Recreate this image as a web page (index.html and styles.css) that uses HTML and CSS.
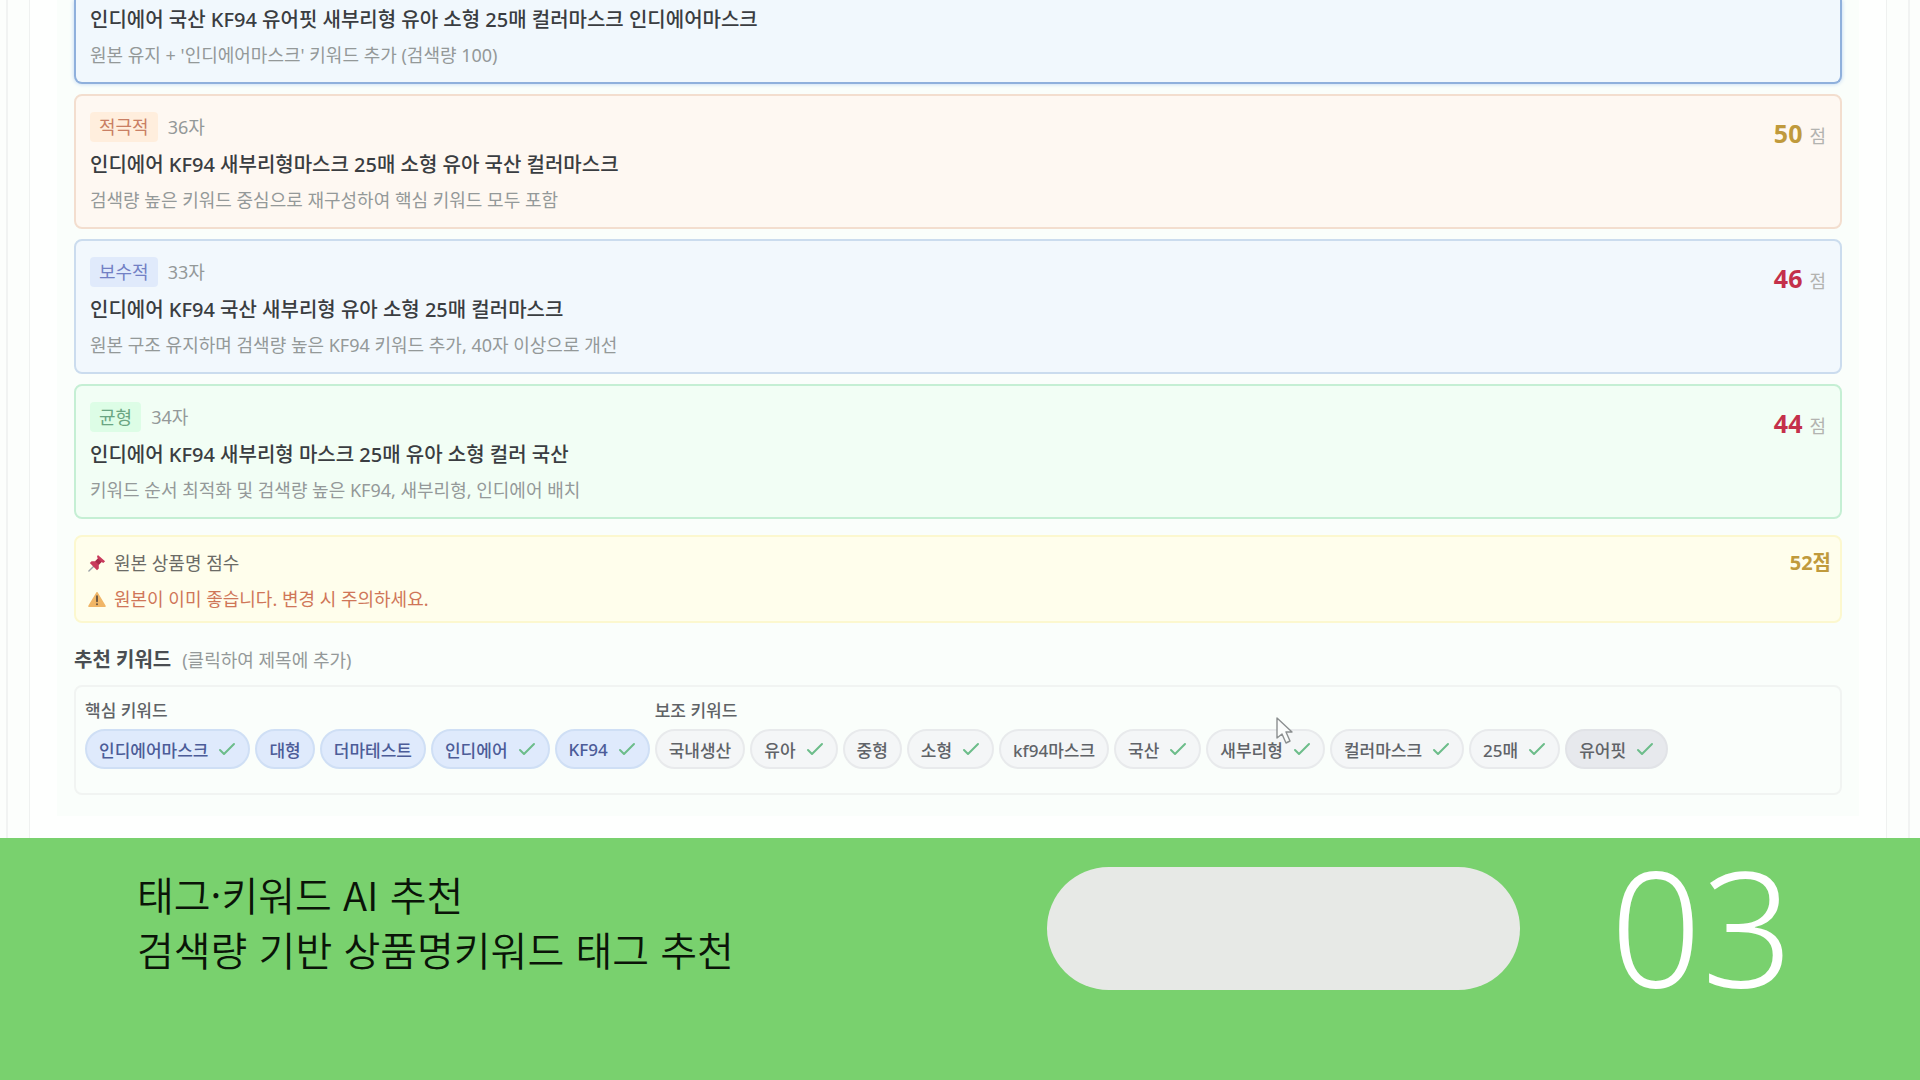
FILE: index.html
```html
<!DOCTYPE html>
<html lang="ko">
<head>
    <meta charset="UTF-8">
    <meta name="viewport" content="width=device-width, initial-scale=1.0">
    <title>태그·키워드 AI 추천</title>
    <link rel="stylesheet" href="styles.css">
</head>
<body>
    <svg class="sprite">
        <symbol id="check" viewBox="0 0 18 16">
            <path d="M2 9 L6 13 L16 3" fill="none" stroke="#6cbd8a" stroke-width="2" stroke-linecap="round" stroke-linejoin="round"/>
        </symbol>
    </svg>
    <main class="outer">
        <div class="inner">
            <div class="panel">
                <div class="card selected">
                    <div class="info">
                        <h3>인디에어 국산 KF94 유어핏 새부리형 유아 소형 25매 컬러마스크 인디에어마스크</h3>
                        <p>원본 유지 + '인디에어마스크' 키워드 추가 (검색량 100)</p>
                    </div>
                </div>
                <div class="card orange">
                    <div class="info">
                        <div class="meta"><span class="badge">적극적</span><span>36자</span></div>
                        <h3>인디에어 KF94 새부리형마스크 25매 소형 유아 국산 컬러마스크</h3>
                        <p>검색량 높은 키워드 중심으로 재구성하여 핵심 키워드 모두 포함</p>
                    </div>
                    <div class="score"><b class="gold">50</b><span>점</span></div>
                </div>
                <div class="card blue">
                    <div class="info">
                        <div class="meta"><span class="badge">보수적</span><span>33자</span></div>
                        <h3>인디에어 KF94 국산 새부리형 유아 소형 25매 컬러마스크</h3>
                        <p>원본 구조 유지하며 검색량 높은 KF94 키워드 추가, 40자 이상으로 개선</p>
                    </div>
                    <div class="score"><b class="red">46</b><span>점</span></div>
                </div>
                <div class="card green">
                    <div class="info">
                        <div class="meta"><span class="badge">균형</span><span>34자</span></div>
                        <h3>인디에어 KF94 새부리형 마스크 25매 유아 소형 컬러 국산</h3>
                        <p>키워드 순서 최적화 및 검색량 높은 KF94, 새부리형, 인디에어 배치</p>
                    </div>
                    <div class="score"><b class="red">44</b><span>점</span></div>
                </div>
                <div class="origin">
                    <div>
                        <div class="row">
                            <svg class="icon" viewBox="0 0 20 20">
                                <path d="M7 13 L1 19" stroke="#9aa0a6" stroke-width="1.5" stroke-linecap="round"/>
                                <path d="M11 1 L19 8 L17 10 L15 9 L12 12 L12 16 L10 18 L2 10 L4 8 L8 8 L11 5 L10 3 Z" fill="#c93a5c"/>
                                <path d="M11 5 L15 9 L12 12 L8 8 Z" fill="#a92a4b"/>
                            </svg>
                            <span>원본 상품명 점수</span>
                        </div>
                        <div class="row warn">
                            <svg class="icon" viewBox="0 0 20 20">
                                <path d="M10 3 L19 18 H1 Z" fill="#f0b566" stroke="#f0b566" stroke-width="1.5" stroke-linejoin="round"/>
                                <path d="M10 7 V12.5" stroke="#6e5a44" stroke-width="2.2" stroke-linecap="round"/>
                                <circle cx="10" cy="15.8" r="1.2" fill="#6e5a44"/>
                            </svg>
                            <span>원본이 이미 좋습니다. 변경 시 주의하세요.</span>
                        </div>
                    </div>
                    <b class="gold">52점</b>
                </div>
                <div class="heading"><h2>추천 키워드</h2><span>(클릭하여 제목에 추가)</span></div>
                <div class="keywords">
                    <div class="group core">
                        <h4>핵심 키워드</h4>
                        <div class="tags">
                            <button>인디에어마스크<svg><use href="#check"/></svg></button>
                            <button>대형</button>
                            <button>더마테스트</button>
                            <button>인디에어<svg><use href="#check"/></svg></button>
                            <button>KF94<svg><use href="#check"/></svg></button>
                        </div>
                    </div>
                    <div class="group">
                        <h4>보조 키워드</h4>
                        <div class="tags">
                            <button>국내생산</button>
                            <button>유아<svg><use href="#check"/></svg></button>
                            <button>중형</button>
                            <button>소형<svg><use href="#check"/></svg></button>
                            <button>kf94마스크</button>
                            <button>국산<svg><use href="#check"/></svg></button>
                            <button class="hovered">새부리형<svg><use href="#check"/></svg>
                                <svg class="cursor" viewBox="0 0 18 28">
                                    <path d="M1 1 V21 L6 17 L10 26 L14 24 L10 15 H16 Z" fill="#fafcfb" stroke="#8b8f90" stroke-width="1.4" stroke-linejoin="round"/>
                                </svg>
                            </button>
                            <button>컬러마스크<svg><use href="#check"/></svg></button>
                            <button>25매<svg><use href="#check"/></svg></button>
                            <button class="dark">유어핏<svg><use href="#check"/></svg></button>
                        </div>
                    </div>
                </div>
            </div>
        </div>
    </main>
    <footer class="banner">
        <p>태그·키워드 AI 추천<br>검색량 기반 상품명키워드 태그 추천</p>
        <div class="blank"></div>
        <div class="num">03</div>
    </footer>
</body>
</html>
```

FILE: styles.css
```css
*{
    margin: 0;
    padding: 0;
    box-sizing: border-box;
}
body{
    display: flex;
    flex-direction: column;
    min-height: 100vh;
    background-color: #fcfefc;
    font-family: "Noto Sans", "Noto Sans CJK KR", sans-serif;
    font-size: 18px;
    line-height: 24px;
    color: #949999;
}
.sprite{
    display: none;
}
.outer{
    margin: 0 10px 0 6px;
    padding: 0 21px;
    border: solid #f1f3f2;
    border-width: 0 2px;
}
.inner{
    padding: 0 27px 22px;
    border: solid #eff1f0;
    border-width: 0 1px;
    background-color: #fefffe;
}
.panel{
    padding: 0 17px 21px;
    background-color: #fafefb;
}
.card{
    display: flex;
    justify-content: space-between;
    margin-bottom: 10px;
    padding: 16px 14px 15px;
    border: 2px solid;
    border-radius: 8px;
}
.card h3{
    margin: 9px 0;
    font-size: 20px;
    font-weight: 500;
    line-height: 28px;
    color: #3a3d41;
}
.selected{
    padding-top: 6px;
    border-top: 0;
    border-radius: 0 0 8px 8px;
    border-color: #8fb0dc;
    background-color: #f1f8fd;
    box-shadow: 0 0 4px #b9d3f2;
}
.card.selected h3{
    margin-top: 0;
}
.meta{
    display: flex;
    align-items: center;
    gap: 10px;
}
.badge{
    padding: 3px 9px;
    border-radius: 4px;
}
.orange{
    border-color: #f3decf;
    background-color: #fef8f2;
}
.orange .badge{
    background-color: #ffeedd;
    color: #c97f64;
}
.blue{
    border-color: #cbdcee;
    background-color: #f2f8fd;
}
.blue .badge{
    background-color: #e0eafb;
    color: #7280c4;
}
.green{
    border-color: #c5efd4;
    background-color: #f2fef5;
}
.green .badge{
    background-color: #ddfde6;
    color: #6aa582;
}
.score{
    display: flex;
    align-items: baseline;
    gap: 7px;
    padding-top: 3px;
    color: #b3b3b0;
}
.score b{
    font-size: 25px;
    line-height: 36px;
}
.gold{
    color: #c09a3c;
}
.score .red{
    color: #c4304a;
}
.origin{
    display: flex;
    justify-content: space-between;
    margin-top: 16px;
    padding: 14px 9px 10px 12px;
    border: 2px solid #fcf8cf;
    border-radius: 8px;
    background-color: #fffeec;
}
.origin b{
    font-size: 20px;
}
.row{
    display: flex;
    align-items: center;
    gap: 8px;
    margin-bottom: 12px;
    color: #6b6b66;
}
.row:last-child{
    margin-bottom: 0;
}
.warn{
    color: #cf7658;
}
.icon{
    width: 18px;
    height: 18px;
}
.heading{
    display: flex;
    align-items: center;
    gap: 11px;
    margin: 25px 0 13px;
}
.heading h2{
    font-size: 20px;
    font-weight: 600;
    color: #4a4e52;
}
.keywords{
    display: flex;
    gap: 5px;
    padding: 12px 9px 24px;
    border: 2px solid #f1f4f2;
    border-radius: 8px;
}
.group h4{
    margin-bottom: 6px;
    font-size: 17px;
    font-weight: 500;
    color: #5f6366;
}
.tags{
    display: flex;
    gap: 5px;
}
.tags button{
    display: flex;
    align-items: center;
    gap: 10px;
    height: 40px;
    padding: 0 12px;
    border: 2px solid #e8eaec;
    border-radius: 20px;
    background-color: #f4f6f7;
    font: 500 17px "Noto Sans", "Noto Sans CJK KR", sans-serif;
    color: #606368;
}
.tags svg{
    width: 18px;
    height: 16px;
}
.core .tags button{
    border-color: #cfdff5;
    background-color: #dfeafc;
    color: #4c5c98;
}
.tags .dark{
    border-color: #e1e3e7;
    background-color: #e7e9ed;
}
.tags .hovered{
    position: relative;
}
.tags .cursor{
    position: absolute;
    top: -14px;
    left: 68px;
    width: 18px;
    height: 28px;
}
.banner{
    display: flex;
    flex: 1;
    align-items: flex-start;
    padding: 29px 127px 0 137px;
    background-color: #79d16e;
}
.banner p{
    flex: 1;
    font-family: "Noto Sans CJK KR", sans-serif;
    font-size: 40px;
    font-weight: 350;
    line-height: 55px;
    color: #0a1408;
}
.blank{
    width: 473px;
    height: 123px;
    border-radius: 62px;
    background-color: #e7e9e6;
}
.num{
    margin-left: 90px;
    font-size: 160px;
    font-weight: 350;
    line-height: 116px;
    color: #fff;
}
```
